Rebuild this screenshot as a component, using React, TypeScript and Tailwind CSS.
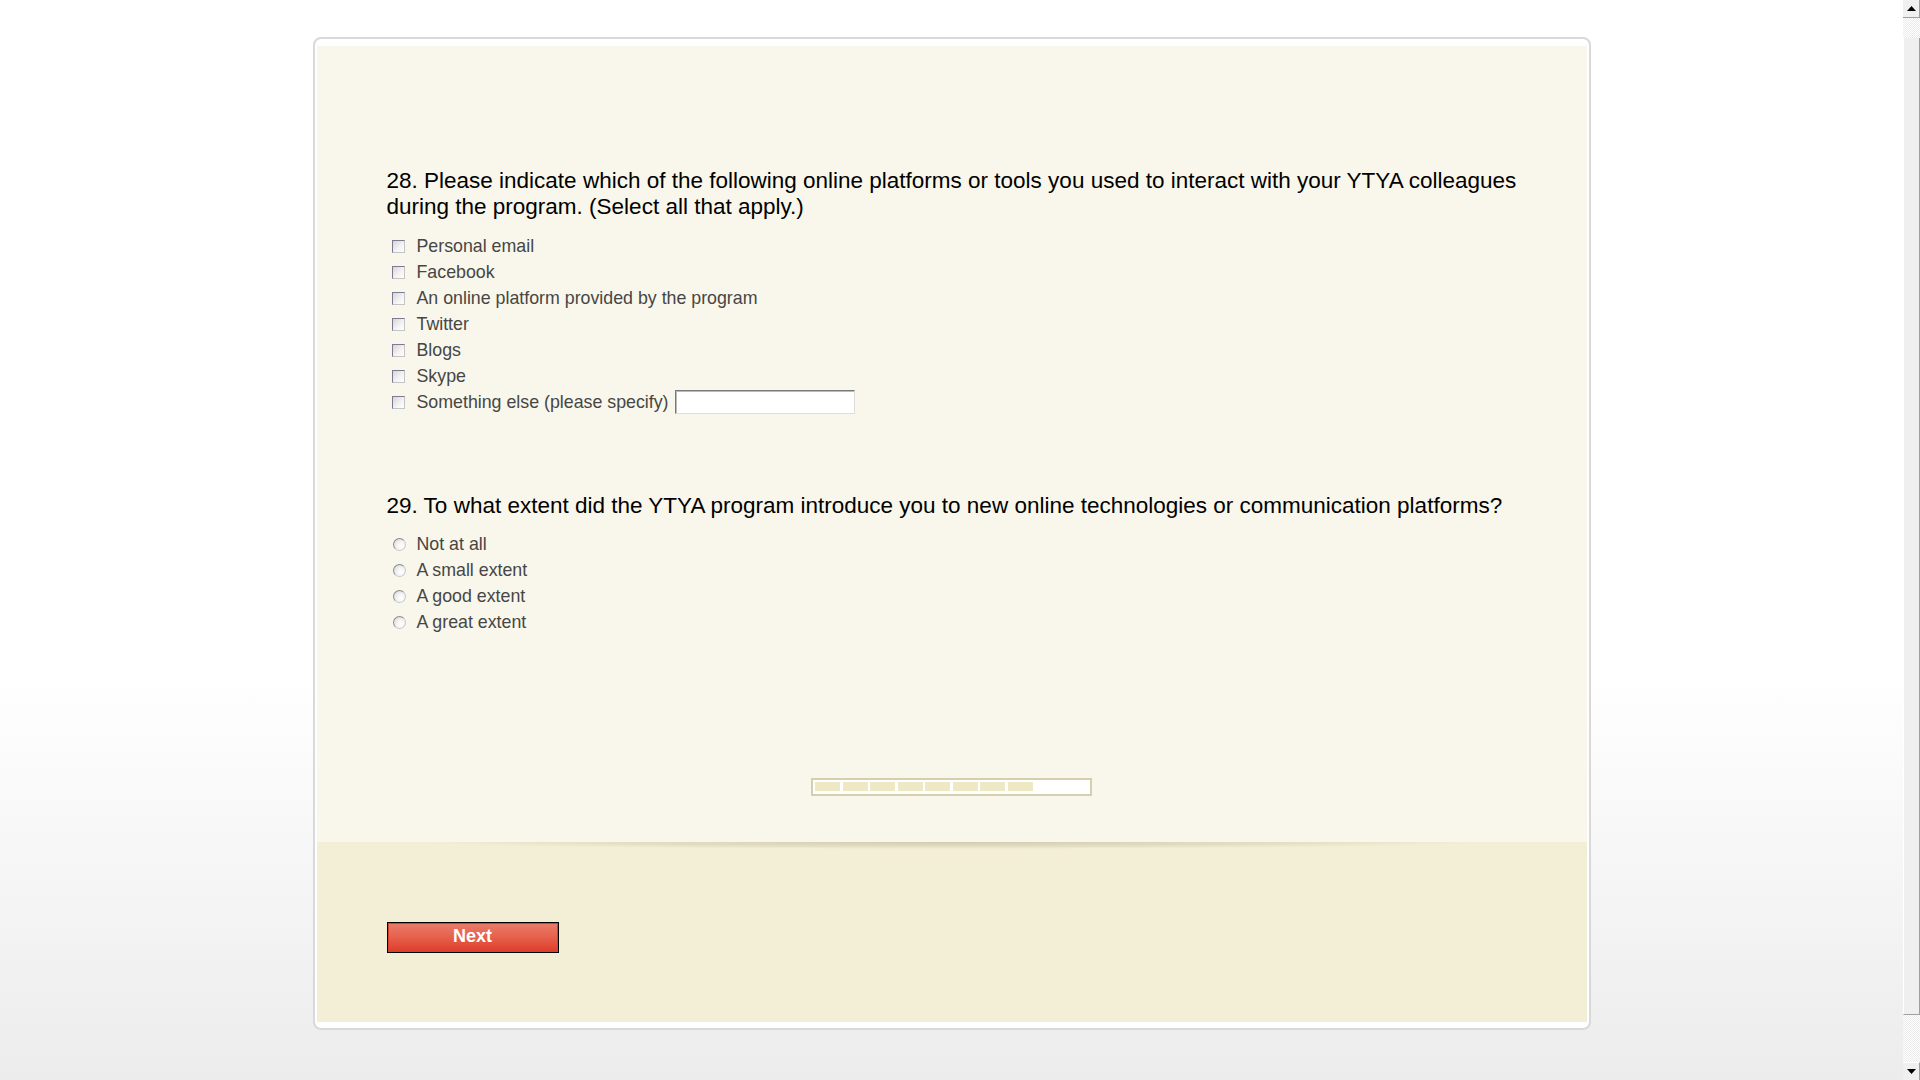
import React from "react";

const platforms = [
  "Personal email",
  "Facebook",
  "An online platform provided by the program",
  "Twitter",
  "Blogs",
  "Skype",
];

const extents = ["Not at all", "A small extent", "A good extent", "A great extent"];

function Checkbox() {
  return (
    <span className="mr-[12px] ml-[5px] inline-block h-[13px] w-[13px] shrink-0 border border-t-[#7f7890] border-l-[#7f7890] border-r-[#c4c4c4] border-b-[#c4c4c4] bg-[linear-gradient(135deg,#d6d6d6_0%,#f4f4f4_60%,#ffffff_100%)]" />
  );
}

function Radio() {
  return (
    <span className="mr-[11px] ml-[6px] inline-block h-[13px] w-[13px] shrink-0 rounded-full border border-t-[#8c8c8c] border-l-[#8c8c8c] border-r-[#c8c8c8] border-b-[#c8c8c8] bg-[radial-gradient(circle_at_65%_65%,#ffffff_0%,#f2f2f2_45%,#cfcfcf_100%)]" />
  );
}

function Arrow({ up }: { up?: boolean }) {
  return (
    <svg width="9" height="5" viewBox="0 0 9 5">
      {up ? <path d="M0 5 L4.5 0 L9 5 Z" fill="#000" /> : <path d="M0 0 L9 0 L4.5 5 Z" fill="#000" />}
    </svg>
  );
}

function Scrollbar() {
  return (
    <div className="flex h-screen w-[17px] flex-col bg-[#f4f4f4]">
      <div className="flex h-[18px] items-center justify-center border-r border-b border-r-[#a0a0a0] border-b-[#a0a0a0] bg-[#f0f0f0]">
        <Arrow up />
      </div>
      <div className="h-[20px] bg-[repeating-conic-gradient(#ffffff_0_25%,#ebebeb_0_50%)] bg-[length:2px_2px]" />
      <div className="h-[977px] border-l border-r border-b border-l-white border-r-[#9f9f9f] border-b-[#9f9f9f] bg-[#efefef]" />
      <div className="h-[47px] bg-[repeating-conic-gradient(#ffffff_0_25%,#ebebeb_0_50%)] bg-[length:2px_2px]" />
      <div className="flex h-[18px] items-center justify-center border-t border-r border-t-white border-r-[#a0a0a0] bg-[#f0f0f0]">
        <Arrow />
      </div>
    </div>
  );
}

export default function App() {
  return (
    <div className="flex h-screen w-full overflow-hidden font-['Liberation_Sans',Arial,sans-serif]">
      <div className="flex-1 bg-[linear-gradient(to_bottom,#ffffff_0%,#ffffff_62%,#ececec_100%)] pt-[37px]">
        <div className="mx-auto w-[1278px] rounded-[8px] border-2 border-[#d9d9d9] bg-white px-[2px] pt-[7px] pb-[6px]">
          {/* questions */}
          <div className="flex h-[796px] flex-col bg-[#f9f7eb] pt-[122px] pr-[40px] pl-[70px]">
            <h2 className="text-[22.5px] leading-[26px] text-black">
              28. Please indicate which of the following online platforms or tools you used to interact with your YTYA colleagues during the program. (Select all that apply.)
            </h2>
            <div className="mt-[13px] flex flex-col text-[17.8px] leading-[26px] text-[#464646]">
              {platforms.map((p) => (
                <label key={p} className="flex h-[26px] items-center">
                  <Checkbox />
                  {p}
                </label>
              ))}
              <label className="flex h-[26px] items-center">
                <Checkbox />
                Something else (please specify)
                <span className="ml-[6px] inline-block h-[24px] w-[180px] border border-t-[#7a7a7a] border-l-[#7a7a7a] border-r-[#dedede] border-b-[#dedede] bg-white shadow-[inset_1px_1px_0_#b9b9b9]" />
              </label>
            </div>

            <h2 className="mt-[78px] text-[22.5px] leading-[26px] text-black">
              29. To what extent did the YTYA program introduce you to new online technologies or communication platforms?
            </h2>
            <div className="mt-[12px] flex flex-col text-[17.8px] leading-[26px] text-[#464646]">
              {extents.map((e) => (
                <label key={e} className="flex h-[26px] items-center">
                  <Radio />
                  {e}
                </label>
              ))}
            </div>

            {/* progress */}
            <div className="mt-auto mr-[-40px] mb-[46px] ml-[-70px] flex justify-center">
              <div className="flex h-[18px] w-[281px] border-2 border-[#d4d0ae] bg-white pt-[2px] pl-[2px]">
                {[0, 1, 2, 3, 4, 5, 6, 7].map((i) => (
                  <span
                    key={i}
                    className={
                      i % 2 === 0
                        ? "mr-[3px] h-[9px] w-[25px] bg-[#efe8c4]"
                        : "mr-[2px] h-[9px] w-[25px] bg-[#efe8c4]"
                    }
                  />
                ))}
              </div>
            </div>
          </div>

          {/* footer */}
          <div className="relative h-[180px] bg-[#f3eed6] pt-[80px] pl-[70px]">
            <div className="absolute top-0 right-[104px] left-[100px] h-[7px] bg-[radial-gradient(ellipse_50%_100%_at_50%_0%,rgba(150,140,100,0.35)_0%,rgba(150,140,100,0.18)_60%,rgba(150,140,100,0)_100%)]" />
            <button className="h-[31px] w-[172px] border border-black p-0">
              <span className="flex h-full w-full items-center justify-center border border-[#d8402b] bg-[linear-gradient(to_bottom,#ea7b68_0%,#e5604c_50%,#de3f2b_100%)] pb-[3px] text-[18px] font-bold text-white">
                Next
              </span>
            </button>
          </div>
        </div>
      </div>
      <Scrollbar />
    </div>
  );
}
